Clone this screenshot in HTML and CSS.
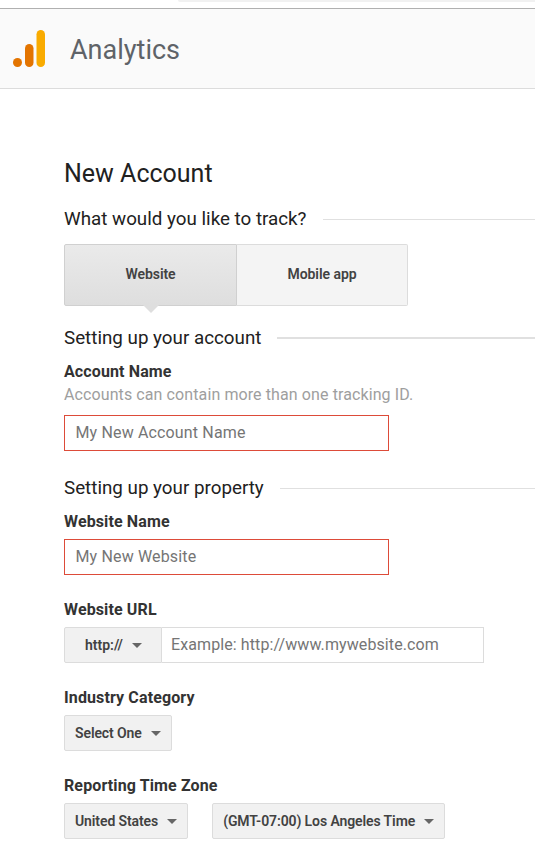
FILE: index.html
```html
<!DOCTYPE html>
<html lang="en">
<head>
<meta charset="utf-8">
<title>Analytics</title>
<link rel="stylesheet" href="styles.css">
</head>
<body>
<div class="topstrip"><div class="omnibox"></div></div>
<header class="appbar">
  <svg class="logo" width="33" height="37" viewBox="0 0 33 37" aria-hidden="true">
    <circle cx="4.5" cy="32.500" r="4.5" fill="#e37400"/>
    <rect x="12" y="14" width="8.500" height="23" rx="4.250" fill="#e37400"/>
    <rect x="23.500" y="0" width="8.500" height="37" rx="4.250" fill="#f9ab00"/>
  </svg>
  <span class="brand">Analytics</span>
</header>
<main class="page">
  <h1 class="title">New Account</h1>
  <div class="section track"><span>What would you like to track?</span><i class="rule"></i></div>
  <div class="toggle">
    <div class="tab active">Website</div>
    <div class="tab">Mobile app</div>
  </div>
  <div class="section account"><span>Setting up your account</span><i class="rule thick"></i></div>
  <div class="label l-account">Account Name</div>
  <div class="hint">Accounts can contain more than one tracking ID.</div>
  <div class="input error">My New Account Name</div>
  <div class="section property"><span>Setting up your property</span><i class="rule"></i></div>
  <div class="label l-site">Website Name</div>
  <div class="input error">My New Website</div>
  <div class="label l-url">Website URL</div>
  <div class="urlrow">
    <div class="proto">http://<b class="caret"></b></div>
    <div class="urlinput">Example: http://www.mywebsite.com</div>
  </div>
  <div class="label l-ind">Industry Category</div>
  <div class="selects"><div class="select">Select One<b class="caret"></b></div></div>
  <div class="label l-tz">Reporting Time Zone</div>
  <div class="selects tz">
    <div class="select">United States<b class="caret"></b></div>
    <div class="select">(GMT-07:00) Los Angeles Time<b class="caret"></b></div>
  </div>
</main>
</body>
</html>
```
FILE: styles.css
```css
* { box-sizing: border-box; }
html, body { margin: 0; padding: 0; background: #fff; overflow: hidden; }
body { width: 535px; height: 857px; font-family: Roboto, "Liberation Sans", sans-serif; color: #212121; }

.topstrip { height: 9px; background: #fff; border-bottom: 1px solid #b0b0b0; padding-left: 178px; }
.omnibox { height: 2px; background: #f1f1f1; border-bottom-left-radius: 5px; }

.appbar { height: 80px; background: #fafafa; border-bottom: 1px solid #dcdcdc; display: flex; align-items: center; padding-left: 13px; }
.logo { flex: none; }
.brand { margin-left: 24px; font-size: 27px; color: #5f6368; line-height: 1; margin-top: 4px; }

.page { padding-left: 64px; }
.title { margin: 70px 0 0; font-size: 25px; font-weight: 400; line-height: 30px; }

.section { display: flex; align-items: center; font-size: 18.800px; line-height: 24px; white-space: nowrap; }
.section .rule { flex: 1; margin-left: 16px; height: 1px; background: #e0e0e0; }
.section .rule.thick { height: 2px; }
.track { margin-top: 18px; }
.account { margin-top: 20px; }
.property { margin-top: 25px; }

.toggle { display: flex; width: 344px; height: 62px; margin-top: 13px; }
.tab { position: relative; width: 171px; display: flex; align-items: center; justify-content: center; padding-bottom: 2px; font-size: 14px; font-weight: 600; letter-spacing: -.05px; color: #424242; border: 1px solid #dcdcdc; background: #f4f4f4; border-radius: 0 2px 2px 0; border-left: 0; }
.tab.active { width: 173px; background: linear-gradient(#eaeaea, #dedede); border: 1px solid #d0d0d0; border-radius: 2px 0 0 2px; }
.tab.active::after { content: ""; position: absolute; left: 78px; bottom: -8px; width: 0; height: 0; border-left: 8px solid transparent; border-right: 8px solid transparent; border-top: 8px solid #dedede; }

.label { font-size: 16px; font-weight: 700; line-height: 20px; color: #333; letter-spacing: .12px; }
.l-account { margin-top: 12px; }
.l-site { margin-top: 12px; }
.l-url { margin-top: 25px; }
.l-ind { margin-top: 25px; }
.l-tz { margin-top: 25px; }
.hint { font-size: 16px; line-height: 20px; margin-top: 3px; color: #9e9e9e; letter-spacing: .1px; }

.input { width: 325px; height: 36px; margin-top: 7px; padding-left: 10.500px; font-size: 16px; line-height: 34px; color: #757575; border: 1px solid #dd4b39; letter-spacing: .15px; }
.hint + .input { margin-top: 10px; }

.urlrow { display: flex; width: 420px; height: 36px; margin-top: 7px; }
.proto { width: 98px; display: flex; align-items: center; padding-left: 20px; padding-bottom: 1px; font-size: 14px; font-weight: 600; color: #424242; background: #f1f1f1; border: 1px solid #dcdcdc; border-radius: 2px 0 0 2px; }
.urlinput { flex: 1; padding-left: 9px; font-size: 16px; line-height: 34px; color: #757575; border: 1px solid #dcdcdc; border-left: 0; white-space: nowrap; letter-spacing: .1px; }

.selects { display: flex; gap: 24px; margin-top: 7px; }
.select { height: 36px; display: flex; align-items: center; padding: 0 10px 1px; font-size: 14px; font-weight: 600; letter-spacing: -.1px; color: #424242; background: #f1f1f1; border: 1px solid #dcdcdc; border-radius: 2px; white-space: nowrap; }
.caret { flex: none; width: 0; height: 0; margin: 1px 0 0 9px; border-left: 5px solid transparent; border-right: 5px solid transparent; border-top: 5px solid #666; }
```
